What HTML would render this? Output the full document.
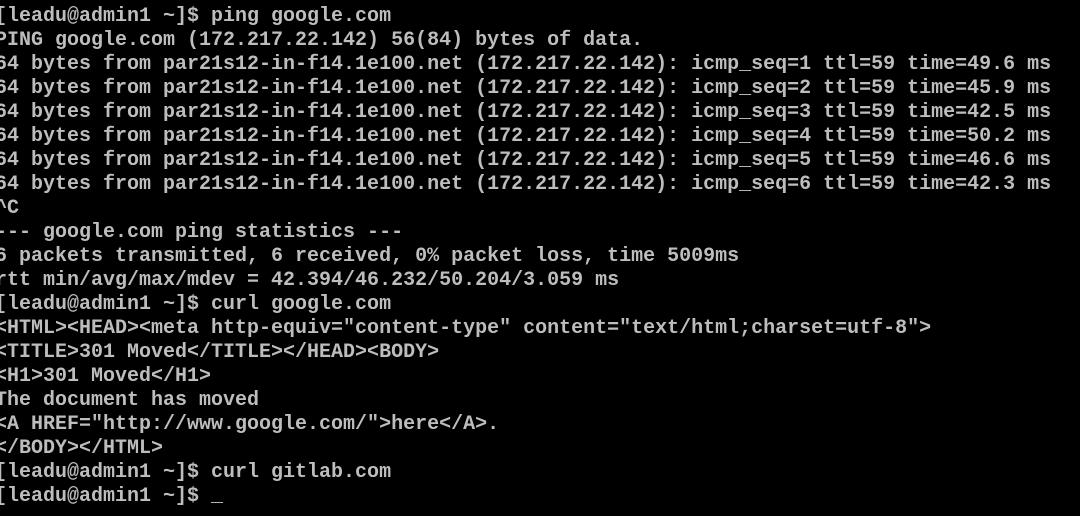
<!DOCTYPE html>
<html><head><style>
html,body{margin:0;padding:0;background:#000;width:1080px;height:516px;overflow:hidden}
pre{position:absolute;left:-5px;top:5px;margin:0;font-family:"Liberation Mono",monospace;font-size:20px;line-height:24px;color:#bdbdbd;letter-spacing:0;font-weight:bold}
</style></head><body><pre>[leadu@admin1 ~]$ ping google.com
PING google.com (172.217.22.142) 56(84) bytes of data.
64 bytes from par21s12-in-f14.1e100.net (172.217.22.142): icmp_seq=1 ttl=59 time=49.6 ms
64 bytes from par21s12-in-f14.1e100.net (172.217.22.142): icmp_seq=2 ttl=59 time=45.9 ms
64 bytes from par21s12-in-f14.1e100.net (172.217.22.142): icmp_seq=3 ttl=59 time=42.5 ms
64 bytes from par21s12-in-f14.1e100.net (172.217.22.142): icmp_seq=4 ttl=59 time=50.2 ms
64 bytes from par21s12-in-f14.1e100.net (172.217.22.142): icmp_seq=5 ttl=59 time=46.6 ms
64 bytes from par21s12-in-f14.1e100.net (172.217.22.142): icmp_seq=6 ttl=59 time=42.3 ms
^C
--- google.com ping statistics ---
6 packets transmitted, 6 received, 0% packet loss, time 5009ms
rtt min/avg/max/mdev = 42.394/46.232/50.204/3.059 ms
[leadu@admin1 ~]$ curl google.com
&lt;HTML&gt;&lt;HEAD&gt;&lt;meta http-equiv="content-type" content="text/html;charset=utf-8"&gt;
&lt;TITLE&gt;301 Moved&lt;/TITLE&gt;&lt;/HEAD&gt;&lt;BODY&gt;
&lt;H1&gt;301 Moved&lt;/H1&gt;
The document has moved
&lt;A HREF="http://www.google.com/"&gt;here&lt;/A&gt;.
&lt;/BODY&gt;&lt;/HTML&gt;
[leadu@admin1 ~]$ curl gitlab.com
[leadu@admin1 ~]$ _</pre></body></html>
